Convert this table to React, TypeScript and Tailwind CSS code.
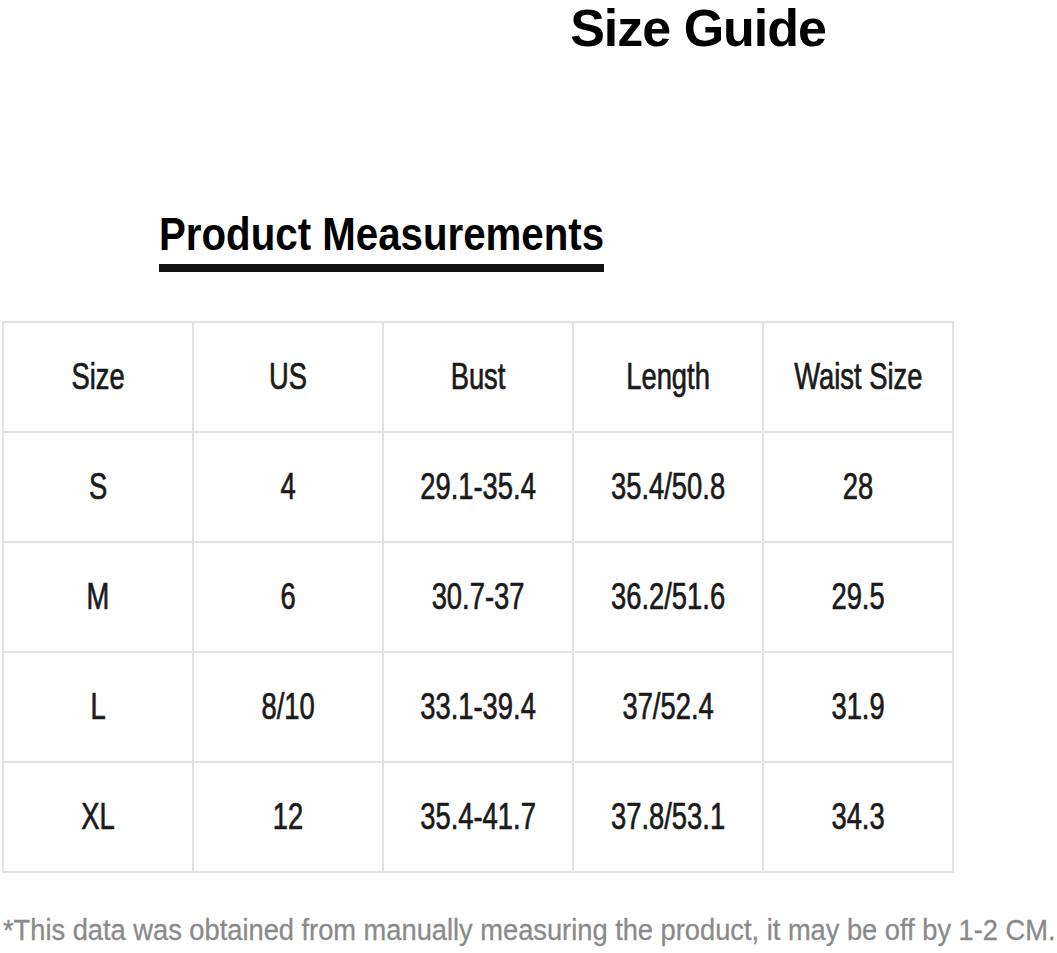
const HEAD = ["Size", "US", "Bust", "Length", "Waist Size"];

const ROWS = [
  ["S", "4", "29.1-35.4", "35.4/50.8", "28"],
  ["M", "6", "30.7-37", "36.2/51.6", "29.5"],
  ["L", "8/10", "33.1-39.4", "37/52.4", "31.9"],
  ["XL", "12", "35.4-41.7", "37.8/53.1", "34.3"],
];

export default function App() {
  return (
    <div className="w-[1057px] h-[953px] bg-white overflow-hidden text-black [font-family:'Liberation_Sans',Arial,sans-serif]">
      <div className="flex justify-end pr-[231px]">
        <h1 className="text-[52px] leading-[56px] font-bold tracking-[-1px]">Size Guide</h1>
      </div>

      <div className="pl-[159px] pt-[155px]">
        <h2 className="text-[46px] leading-[46px] font-bold whitespace-nowrap">
          <span className="inline-block origin-left scale-x-[0.875]">Product Measurements</span>
        </h2>
        <div className="w-[445px] h-[8px] bg-[#111] mt-[7px]" />
      </div>

      <div className="pl-[2px] pt-[49px]">
        <div className="grid grid-cols-[repeat(5,190px)] w-[952px] border-t-2 border-l-2 border-[#e2e2e2]">
          {[HEAD, ...ROWS].map((row, i) =>
            row.map((cell, j) => (
              <div
                key={`${i}-${j}`}
                className="h-[110px] flex items-center justify-center border-r-2 border-b-2 border-[#e2e2e2] text-[36px] leading-[36px] text-[#1a1a1a] whitespace-nowrap [-webkit-text-stroke:0.7px_#1a1a1a]"
              >
                <span className="inline-block scale-x-[0.76]">{cell}</span>
              </div>
            ))
          )}
        </div>
      </div>

      <p className="pl-[3px] pt-[43px] text-[29px] leading-[29px] text-[#8a8a8a] whitespace-nowrap [-webkit-text-stroke:0.3px_#8a8a8a]">
        <span className="inline-block origin-left scale-x-[0.94]">
          *This data was obtained from manually measuring the product, it may be off by 1-2 CM.
        </span>
      </p>
    </div>
  );
}
